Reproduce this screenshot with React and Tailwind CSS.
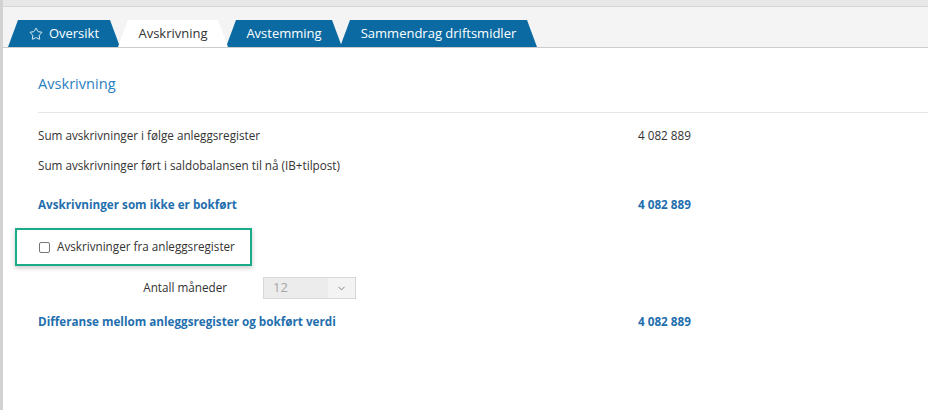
import { Star, ChevronDown } from "lucide-react";

const tabs = [
    { label: "Oversikt", icon: true, w: "w-[112px]" },
    { label: "Avskrivning", active: true, w: "w-[110px]" },
    { label: "Avstemming", w: "w-[116px]" },
    { label: "Sammendrag driftsmidler", w: "w-[197px]" },
];

function Tab({ label, icon, active, w }) {
    return (
        <div
            className={`${w} h-[27px] -mr-[2px] flex items-center justify-center gap-[6px] text-[13px] [clip-path:polygon(10px_0,calc(100%-10px)_0,100%_100%,0_100%)] rounded-t-[4px] ${
                active
                    ? "bg-white text-[#333] z-10 relative"
                    : "bg-[#0b6aa2] text-white"
            }`}
        >
            {icon && <Star className="w-[14px] h-[14px]" strokeWidth={1.5} />}
            <span>{label}</span>
        </div>
    );
}

function Row({ label, value, bold, className = "" }) {
    return (
        <div
            className={`flex items-center text-[11.7px] h-[18px] ${
                bold ? "font-bold text-[#1f6fae]" : "text-[#333]"
            } ${className}`}
        >
            <span className="w-[600px]">{label}</span>
            <span>{value}</span>
        </div>
    );
}

export default function App() {
    return (
        <div className="w-[928px] h-[410px] bg-white border-l-[3px] border-[#d2d2d2] overflow-hidden font-['Open_Sans',sans-serif]">
            {/* top strip */}
            <div className="h-[7px] bg-[#e8e8e8] border-b border-[#d6d6d6]" />

            {/* tab bar */}
            <div className="h-[41px] bg-[#f4f4f4] border-b border-[#cccccc] flex items-end pl-[5px]">
                {tabs.map((t) => (
                    <Tab key={t.label} {...t} />
                ))}
            </div>

            {/* content */}
            <div className="pl-[35px]">
                <h1 className="text-[14.6px] text-[#2c80bf] pt-[25px] leading-[20px]">
                    Avskrivning
                </h1>
                <div className="mt-[19px] h-px bg-[#e6e6e6]" />

                <Row
                    label="Sum avskrivninger i følge anleggsregister"
                    value="4 082 889"
                    className="mt-[14px]"
                />
                <Row
                    label="Sum avskrivninger ført i saldobalansen til nå (IB+tilpost)"
                    className="mt-[12px]"
                />
                <Row
                    label="Avskrivninger som ikke er bokført"
                    value="4 082 889"
                    bold
                    className="mt-[21px]"
                />

                {/* highlighted checkbox */}
                <div className="-ml-[23px] mt-[14px] w-[237px] h-[38px] border-2 border-[#1bab8b] shadow-[0_2px_5px_rgba(0,0,0,0.22)] flex items-center pl-[22px] gap-[7px] text-[11.7px] text-[#333]">
                    <span className="w-[11px] h-[11px] border border-[#767676] rounded-[2px] bg-white" />
                    <span>Avskrivninger fra anleggsregister</span>
                </div>

                <div className="mt-[11px] flex items-center h-[22px] text-[11.7px] text-[#333]">
                    <span className="w-[189px] text-right">Antall måneder</span>
                    <div className="ml-[36px] w-[93px] h-[22px] border border-[#d8d8d8] flex">
                        <span className="flex-1 bg-[#ececec] text-[#a8a8a8] pl-[9px] flex items-center text-[13px]">
                            12
                        </span>
                        <span className="w-[27px] bg-[#f3f3f3] flex items-center justify-center text-[#777]">
                            <ChevronDown className="w-[11px] h-[11px]" strokeWidth={2} />
                        </span>
                    </div>
                </div>

                <Row
                    label="Differanse mellom anleggsregister og bokført verdi"
                    value="4 082 889"
                    bold
                    className="mt-[14px]"
                />
            </div>
        </div>
    );
}
